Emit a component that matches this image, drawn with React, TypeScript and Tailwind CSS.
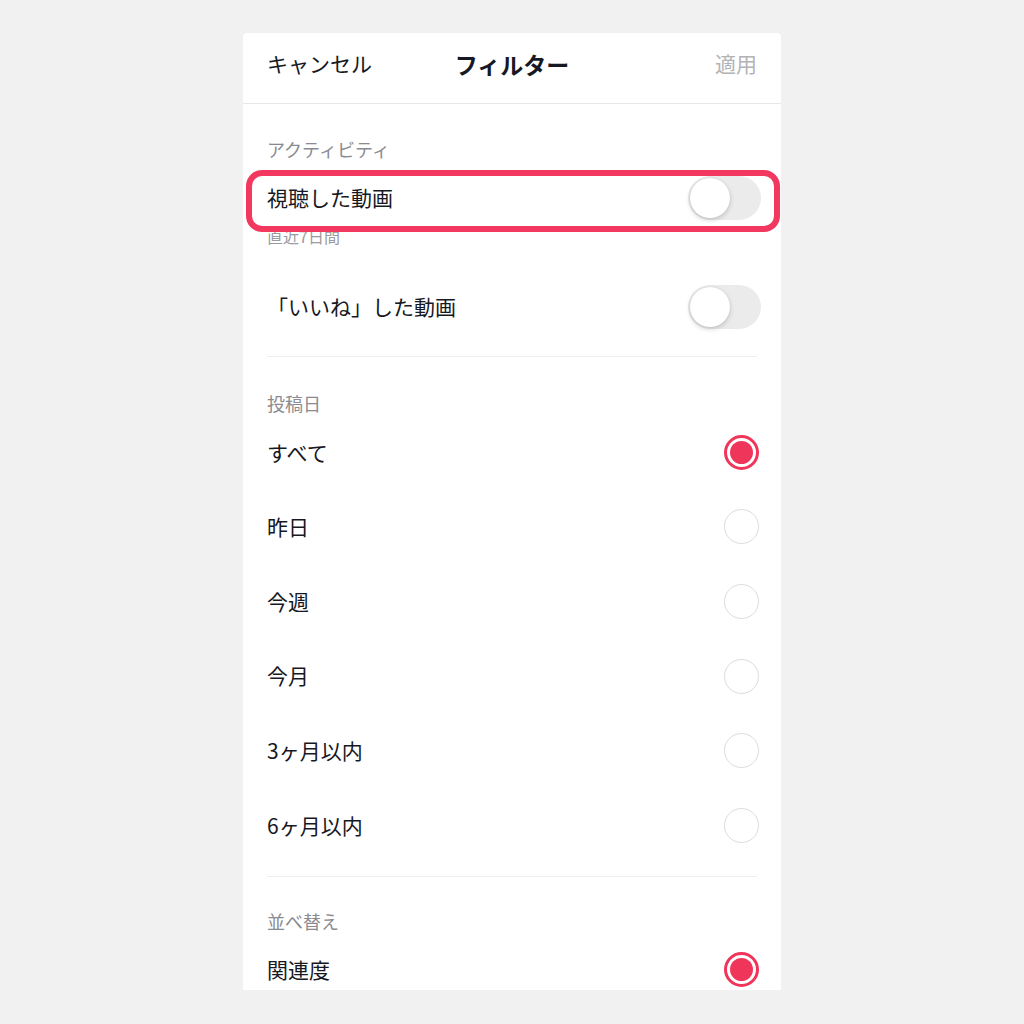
const font = { fontFamily: '"Noto Sans CJK JP", "Noto Sans", sans-serif' };

const Toggle = () => (
  <div className="relative h-[44px] w-[73px] rounded-full bg-[#ebebeb]">
    <div className="absolute left-[2px] top-[2px] h-[40px] w-[40px] rounded-full bg-white shadow-[0_2px_5px_rgba(0,0,0,0.18),0_0_1px_rgba(0,0,0,0.12)]" />
  </div>
);

const Radio = ({ checked }: { checked?: boolean }) =>
  checked ? (
    <div className="flex h-[35px] w-[35px] items-center justify-center rounded-full border-[3px] border-[#f0355b] bg-white">
      <div className="h-[23px] w-[23px] rounded-full bg-[#f0355b]" />
    </div>
  ) : (
    <div className="h-[35px] w-[35px] rounded-full border-[1.5px] border-[#dcdcdc] bg-white" />
  );

const SectionLabel = ({ children, className }: { children: string; className: string }) => (
  <div className={`h-[24px] pl-6 text-[18px] leading-[24px] text-[#8a8b91] ${className}`}>{children}</div>
);

const RadioRow = ({ label, checked }: { label: string; checked?: boolean }) => (
  <div className="flex h-[74.6px] items-center justify-between pl-6 pr-[22px]">
    <span className="text-[21px] text-[#161823]">{label}</span>
    <Radio checked={checked} />
  </div>
);

const dates = ["すべて", "昨日", "今週", "今月", "3ヶ月以内", "6ヶ月以内"];

export default function App() {
  return (
    <div className="min-h-screen w-full bg-[#f1f1f1] pt-[33px]" style={font}>
      <div className="relative mx-auto h-[957px] w-[538px] overflow-hidden rounded-t-[4px] bg-white">
        {/* header */}
        <div className="grid h-[71px] grid-cols-3 items-center border-b border-[#e8e8e8] px-6 pb-2">
          <span className="justify-self-start text-[21px] text-[#161823]">キャンセル</span>
          <span className="justify-self-center text-[23px] font-bold text-[#161823]">フィルター</span>
          <span className="justify-self-end text-[21px] text-[#b3b3b6]">適用</span>
        </div>

        {/* activity */}
        <SectionLabel className="mt-[33px]">アクティビティ</SectionLabel>
        <div className="mt-[15px] flex h-[44px] items-center justify-between pl-6 pr-[20px]">
          <span className="text-[21px] text-[#161823]">視聴した動画</span>
          <Toggle />
        </div>
        <div className="mt-[6px] h-[20px] pl-6 text-[16px] leading-[20px] text-[#9a9ba0]">直近7日間</div>
        <div className="mt-[39px] flex h-[44px] items-center justify-between pl-6 pr-[20px]">
          <span className="text-[21px] text-[#161823]">「いいね」した動画</span>
          <Toggle />
        </div>
        <div className="mx-6 mt-[27px] h-px bg-[#ededed]" />

        {/* posted date */}
        <SectionLabel className="mt-[34px]">投稿日</SectionLabel>
        {dates.map((d, i) => (
          <RadioRow key={d} label={d} checked={i === 0} />
        ))}
        <div className="mx-6 mt-[13px] h-px bg-[#ededed]" />

        {/* sort */}
        <SectionLabel className="mt-[32px]">並べ替え</SectionLabel>
        <RadioRow label="関連度" checked />

        {/* highlight */}
        <div className="absolute left-[3px] top-[137px] h-[62px] w-[534px] rounded-[16px] border-[6px] border-[#f2385e]" />
      </div>
    </div>
  );
}
